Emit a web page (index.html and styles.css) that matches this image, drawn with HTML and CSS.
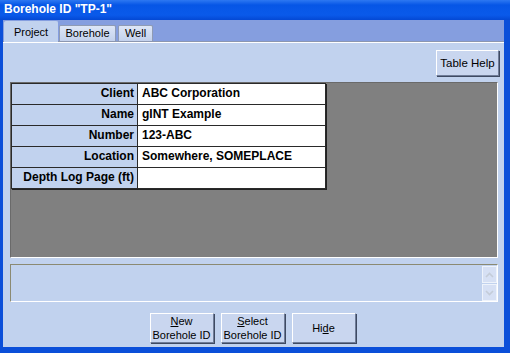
FILE: index.html
```html
<!DOCTYPE html>
<html>
  <head>
    <meta name="viewport" content="width=device-width, initial-scale=1" />
    <title>Borehole ID</title>
    <link rel="stylesheet" href="styles.css">
  </head>
  <body>
    <div class="window">
      <div class="titlebar">Borehole ID "TP-1"</div>
      <div class="client">
        <div class="tabs">
          <span class="tab active">Project</span>
          <span class="tab">Borehole</span>
          <span class="tab">Well</span>
        </div>
        <div class="page">
          <div class="toolbar">
            <button class="btn help">Table Help</button>
          </div>
          <div class="grid-area">
            <table class="fields">
              <tr><th>Client</th><td>ABC Corporation</td></tr>
              <tr><th>Name</th><td>gINT Example</td></tr>
              <tr><th>Number</th><td>123-ABC</td></tr>
              <tr><th>Location</th><td>Somewhere, SOMEPLACE</td></tr>
              <tr><th>Depth Log Page (ft)</th><td></td></tr>
            </table>
          </div>
          <div class="memo">
            <div class="scroll">
              <span class="sb">
                <svg width="9" height="6" viewBox="0 0 9 6"><path d="M1 5 L4.5 1.5 L8 5" fill="none" stroke="#c4ccd8" stroke-width="1.6"/></svg>
              </span>
              <span class="sb">
                <svg width="9" height="6" viewBox="0 0 9 6"><path d="M1 1 L4.5 4.5 L8 1" fill="none" stroke="#c4ccd8" stroke-width="1.6"/></svg>
              </span>
            </div>
          </div>
          <div class="actions">
            <button class="btn"><u>N</u>ew<br>Borehole ID</button>
            <button class="btn"><u>S</u>elect<br>Borehole ID</button>
            <button class="btn">Hi<u>d</u>e</button>
          </div>
        </div>
      </div>
    </div>
  </body>
</html>
```

FILE: styles.css
```css
body {
  margin: 0;
  font-family: "Liberation Sans", Arial, sans-serif;
  font-size: 12px;
  color: #000;
}

/* Window frame */
.window {
  width: 510px;
  height: 353px;
  display: flex;
  flex-direction: column;
  background: #0b4fd9;
  box-sizing: border-box;
}
.titlebar {
  height: 20px;
  flex: none;
  padding-left: 4px;
  line-height: 19px;
  font-size: 12px;
  font-weight: bold;
  color: #fff;
  background: linear-gradient(#2d78f2, #0656e6 25%, #0a5aea 75%, #0448d4);
}
.client {
  flex: 1;
  margin: 0 6px 6px 3px;
  display: flex;
  flex-direction: column;
  background: #c1d2ee;
}

/* Tabs */
.tabs {
  height: 21px;
  flex: none;
  display: flex;
  align-items: flex-end;
  gap: 1px;
  background: #859edf;
  border-bottom: 1px solid #8c97b0;
}
.tab {
  height: 16px;
  line-height: 15px;
  font-size: 11px;
  text-align: center;
  box-sizing: border-box;
  background: linear-gradient(#dde6f7, #c3d1ec);
  border: 1px solid #8f9bb4;
  border-bottom: none;
  border-radius: 2px 2px 0 0;
}
.tab:nth-child(2) { width: 57px; }
.tab:nth-child(3) { width: 35px; margin-left: 1px; }
.tab.active {
  width: 54px;
  height: 21px;
  line-height: 20px;
  margin-left: 1px;
  margin-bottom: -1px;
  background: #c1d2ee;
  border-color: #c1d2ee;
}

/* Tab page */
.page {
  flex: 1;
  display: flex;
  flex-direction: column;
  border-top: 1px solid #fff;
  padding: 0 5px 4px 7px;
}
.toolbar {
  display: flex;
  justify-content: flex-end;
  margin-top: 7px;
}
.btn {
  font-family: inherit;
  font-size: 11px;
  white-space: nowrap;
  color: #000;
  background: #c9d6ef;
  border: 1px solid;
  border-color: #fff #6f7c98 #6f7c98 #fff;
  box-shadow: 1px 1px 0 #3e4a62;
  padding: 0;
  line-height: 14px;
}
.btn.help {
  width: 63px;
  height: 26px;
  font-size: 11.5px;
}

/* Grey grid area with the field table */
.grid-area {
  height: 174px;
  margin: 6px 1px 0 0;
  background: #808080;
  border: 1px solid;
  border-color: #6a6a6a #fff #fff #6a6a6a;
}
.fields {
  border-collapse: collapse;
  width: 315px;
  box-shadow: 1px 1px 0 #222;
}
.fields th,
.fields td {
  height: 21px;
  padding: 2px 4px 0 4px;
  vertical-align: top;
  font-weight: bold;
  border: 1px solid #2a2a2a;
  box-sizing: border-box;
}
.fields th {
  width: 126px;
  text-align: right;
  background: #c1d2ee;
  padding-right: 3px;
}
.fields td {
  background: #fff;
  text-align: left;
}

/* Memo box */
.memo {
  height: 36px;
  margin: 6px 1px 0 0;
  display: flex;
  justify-content: flex-end;
  border: 1px solid;
  border-color: #8b8a72 #fff #fff #8b8a72;
}
.scroll {
  display: flex;
  flex-direction: column;
  gap: 1px;
  padding: 1px 0 0 0;
}
.sb {
  width: 15px;
  height: 17px;
  display: flex;
  align-items: center;
  justify-content: center;
  background: #d6e0f4;
  border: 1px solid #eef3fb;
  box-sizing: border-box;
}

/* Bottom buttons */
.actions {
  display: flex;
  justify-content: center;
  gap: 7px;
  margin-top: 11px;
  padding-right: 4px;
}
.actions .btn {
  width: 64px;
  height: 30px;
}
```
